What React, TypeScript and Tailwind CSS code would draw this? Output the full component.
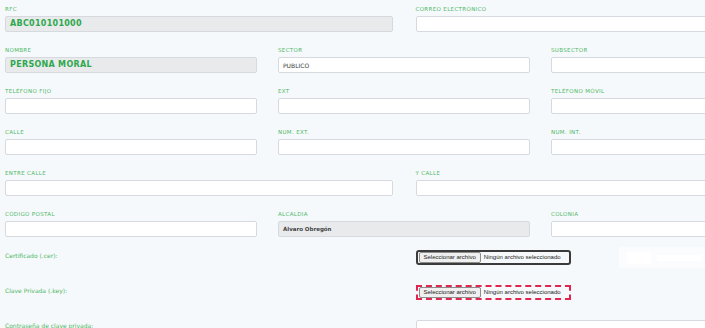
import React from 'react';

const font = { fontFamily: '"DejaVu Sans", "Liberation Sans", sans-serif' };

function Label({ children }: { children: React.ReactNode }) {
  return (
    <div className="h-[9px] mb-[2px] text-[5.5px] leading-[9px] uppercase tracking-[0.35px] text-[#4db866] whitespace-nowrap">
      {children}
    </div>
  );
}

function Field({ label, value, gray, bold }: { label: string; value?: string; gray?: boolean; bold?: boolean }) {
  return (
    <div>
      <Label>{label}</Label>
      <div
        className={`h-[16px] rounded-[2px] border border-[#d6dade] flex items-center px-[4px] ${gray ? 'bg-[#e8eaec]' : 'bg-white'}`}
      >
        {value && (
          <span
            className={
              bold
                ? 'text-[8px] font-bold tracking-[0.3px] text-[#2ea84e]'
                : 'text-[6px] text-[#3c3c3c]'
            }
          >
            {value}
          </span>
        )}
      </div>
    </div>
  );
}

function FileBox({ invalid }: { invalid?: boolean }) {
  return (
    <div
      className={`w-[155px] h-[15px] flex items-center overflow-hidden ${
        invalid ? 'border-2 border-dashed border-[#e0264f]' : 'border-2 border-[#3b3b3b] rounded-[3px]'
      }`}
      style={{ fontFamily: '"Liberation Sans", Arial, sans-serif' }}
    >
      <span className="ml-[1px] h-[11px] px-[4px] flex items-center bg-[#efefef] border border-[#8d8d8d] rounded-[2px] text-[6px] text-[#222] whitespace-nowrap">
        Seleccionar archivo
      </span>
      <span className="ml-[3px] text-[6px] text-[#222] whitespace-nowrap">Ningún archivo seleccionado</span>
    </div>
  );
}

export default function App() {
  return (
    <div className="w-[705px] h-[328px] overflow-hidden bg-[#f6f9fb]" style={font}>
      <div className="w-[798px] ml-[5px] pt-[5px]">
        {/* RFC / correo */}
        <div className="grid grid-cols-2 gap-x-[23px]">
          <Field label="RFC" value="ABC010101000" gray bold />
          <Field label="Correo electrónico" />
        </div>

        <div className="grid grid-cols-3 gap-x-[21px] mt-[14px]">
          <Field label="Nombre" value="PERSONA MORAL" gray bold />
          <Field label="Sector" value="PUBLICO" />
          <Field label="Subsector" />
        </div>

        <div className="grid grid-cols-3 gap-x-[21px] mt-[14px]">
          <Field label="Teléfono fijo" />
          <Field label="Ext" />
          <Field label="Teléfono móvil" />
        </div>

        <div className="grid grid-cols-3 gap-x-[21px] mt-[14px]">
          <Field label="Calle" />
          <Field label="Num. ext." />
          <Field label="Num. int." />
        </div>

        <div className="grid grid-cols-2 gap-x-[23px] mt-[14px]">
          <Field label="Entre calle" />
          <Field label="Y calle" />
        </div>

        <div className="grid grid-cols-3 gap-x-[21px] mt-[14px]">
          <Field label="Código postal" />
          <div>
            <Label>Alcaldia</Label>
            <div className="h-[16px] rounded-[2px] border border-[#d6dade] bg-[#e8eaec] flex items-center px-[4px]">
              <span className="text-[5.5px] font-bold text-[#444]">Álvaro Obregón</span>
            </div>
          </div>
          <Field label="Colonia" />
        </div>

        {/* archivos */}
        <div className="grid grid-cols-2 gap-x-[23px] mt-[13px] items-start">
          <div className="text-[6px] leading-[10px] text-[#4db866] pt-[1px]">Certificado (.cer):</div>
          <div className="flex items-start h-[15px]">
            <FileBox />
            <div className="ml-[48px] -mt-[3px] w-[90px] h-[21px] rounded-[3px] bg-white/50 flex items-center gap-[6px] px-[8px]">
              <div className="w-[24px] h-[12px] bg-white rounded-[1px]" />
              <div className="flex-1 h-[6px] bg-white rounded-[1px]" />
            </div>
          </div>
        </div>

        <div className="grid grid-cols-2 gap-x-[23px] mt-[20px] items-start">
          <div className="text-[6px] leading-[10px] text-[#4db866] pt-[1px]">Clave Privada (.key):</div>
          <FileBox invalid />
        </div>

        <div className="grid grid-cols-2 gap-x-[23px] mt-[20px] items-start">
          <div className="text-[6px] leading-[10px] text-[#4db866] pt-[1px]">Contraseña de clave privada:</div>
          <div className="h-[16px] rounded-[2px] border border-[#d6dade] bg-white" />
        </div>
      </div>
    </div>
  );
}
